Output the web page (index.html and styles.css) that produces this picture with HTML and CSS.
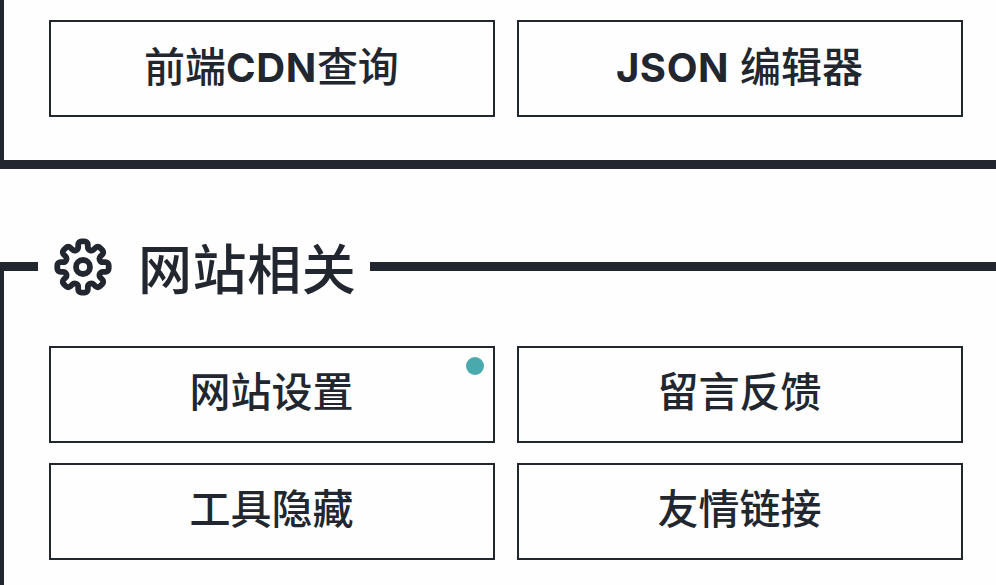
FILE: index.html
```html
<!DOCTYPE html>
<html lang="zh-CN">
<head>
<meta charset="utf-8">
<title>工具</title>
<link rel="stylesheet" href="styles.css">
</head>
<body>
<section class="panel panel-top">
  <div class="grid">
    <a class="tool"><span>前端<b>CDN</b>查询</span></a>
    <a class="tool"><span><b>JSON</b> 编辑器</span></a>
  </div>
</section>
<section class="panel panel-site">
  <h2 class="heading">
    <svg class="gear" viewBox="-30 -30 60 60" fill="none" stroke="currentColor" stroke-width="5.8" stroke-linejoin="round">
      <path d="M-4.8-20L-4.8-22.5A3.2 3.2 0 0 1-1.6-25.7L1.6-25.7A3.2 3.2 0 0 1 4.8-22.5L4.8-20
        A3.48 3.48 0 0 0 10.75-17.54L12.52-19.3A3.2 3.2 0 0 1 17.04-19.3L19.3-17.04A3.2 3.2 0 0 1 19.3-12.52L17.54-10.75
        A3.48 3.48 0 0 0 20-4.8L22.5-4.8A3.2 3.2 0 0 1 25.7-1.6L25.7 1.6A3.2 3.2 0 0 1 22.5 4.8L20 4.8
        A3.48 3.48 0 0 0 17.54 10.75L19.3 12.52A3.2 3.2 0 0 1 19.3 17.04L17.04 19.3A3.2 3.2 0 0 1 12.52 19.3L10.75 17.54
        A3.48 3.48 0 0 0 4.8 20L4.8 22.5A3.2 3.2 0 0 1 1.6 25.7L-1.6 25.7A3.2 3.2 0 0 1-4.8 22.5L-4.8 20
        A3.48 3.48 0 0 0-10.75 17.54L-12.52 19.3A3.2 3.2 0 0 1-17.04 19.3L-19.3 17.04A3.2 3.2 0 0 1-19.3 12.52L-17.54 10.75
        A3.48 3.48 0 0 0-20 4.8L-22.5 4.8A3.2 3.2 0 0 1-25.7 1.6L-25.7-1.6A3.2 3.2 0 0 1-22.5-4.8L-20-4.8
        A3.48 3.48 0 0 0-17.54-10.75L-19.3-12.52A3.2 3.2 0 0 1-19.3-17.04L-17.04-19.3A3.2 3.2 0 0 1-12.52-19.3L-10.75-17.54
        A3.48 3.48 0 0 0-4.8-20Z"/>
      <circle r="7"/>
    </svg>
    <span class="title">网站相关</span>
  </h2>
  <div class="grid">
    <a class="tool"><span>网站设置</span><i class="dot"></i></a>
    <a class="tool"><span>留言反馈</span></a>
    <a class="tool"><span>工具隐藏</span></a>
    <a class="tool"><span>友情链接</span></a>
  </div>
</section>
</body>
</html>
```
FILE: styles.css
```css
* { box-sizing: border-box; }
body {
  margin: 0;
  width: 996px;
  height: 585px;
  overflow: hidden;
  background: #fefefe;
  color: #22262e;
  font-family: Inter, "Noto Sans CJK SC", sans-serif;
}
.panel { border-left: 4px solid #22262e; }
.panel-top {
  height: 169px;
  padding: 20px 33px 0 45px;
  border-bottom: 9px solid #22262e;
}
.panel-site {
  height: 323px;
  margin-top: 93px;
  padding: 0 33px 0 45px;
  border-top: 9px solid #22262e;
}
.grid {
  display: grid;
  grid-template-columns: 446px 446px;
  grid-auto-rows: 97px;
  gap: 20px 22px;
}
.tool {
  position: relative;
  display: flex;
  align-items: center;
  justify-content: center;
  border: 2px solid #22262e;
  font-size: 41px;
  font-weight: 500;
  line-height: 60px;
  white-space: nowrap;
  padding: 0 1px 6px 0;
}
.panel-top .tool { padding-bottom: 3px; }
.tool b { font-weight: 700; font-size: 40px; letter-spacing: 0.6px; }
.dot {
  position: absolute;
  top: 9px;
  right: 9px;
  width: 18px;
  height: 18px;
  border-radius: 50%;
  background: #4aa9ac;
}
.heading {
  display: flex;
  align-items: center;
  width: 332px;
  height: 80px;
  margin: -44px 0 39px -11px;
  padding-left: 15px;
  background: #fefefe;
  font-size: 54px;
  font-weight: 500;
  line-height: 80px;
}
.gear { width: 60px; height: 60px; margin: 0 25px 0 0; flex: none; }
.title { white-space: nowrap; padding-top: 8px; letter-spacing: 0.6px; }
```
